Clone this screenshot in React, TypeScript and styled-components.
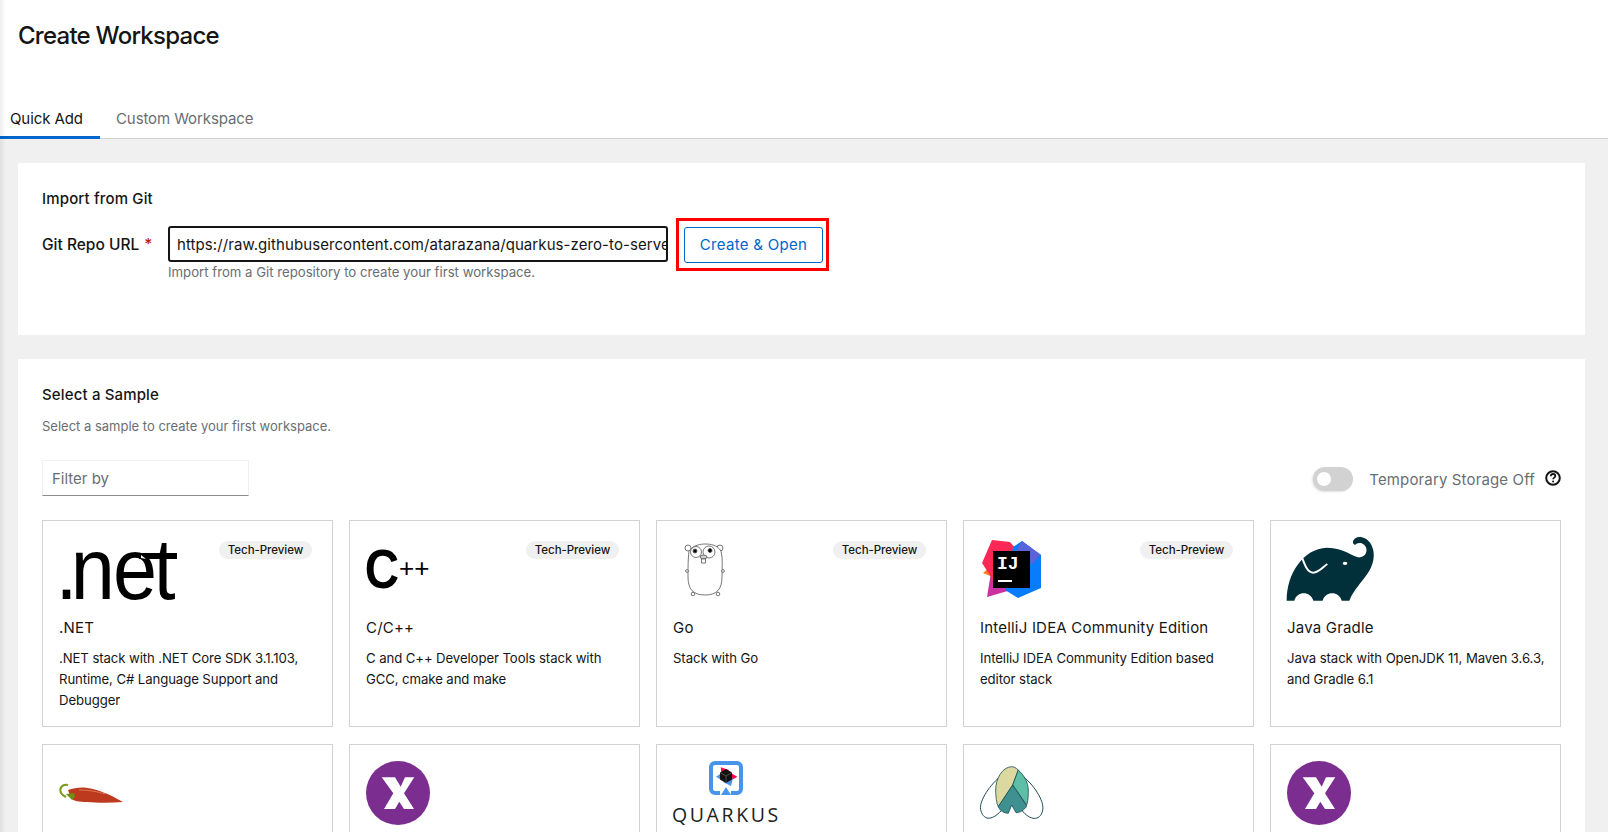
import styled, { createGlobalStyle } from 'styled-components'

const GlobalStyle = createGlobalStyle`
  html, body {
    margin: 0;
    padding: 0;
    height: 832px;
    overflow: hidden;
    background: #fff;
    font-family: "Inter", "Liberation Sans", sans-serif;
    color: #151515;
  }
  * { box-sizing: border-box; }
  svg { overflow: visible; display: block; }
`

const Page = styled.div`
  position: relative;
  height: 832px;
  overflow: hidden;
  display: flex;
  flex-direction: column;
`

const EdgeShadow = styled.div`
  position: absolute;
  left: 0;
  top: 0;
  bottom: 0;
  width: 6px;
  background: linear-gradient(to right, rgba(0, 0, 0, 0.07), rgba(0, 0, 0, 0));
  pointer-events: none;
`

const Header = styled.header`
  height: 103px;
  padding: 18px 18px 0;
  flex: none;
`

const Title = styled.h1`
  margin: 0;
  font-size: 24px;
  line-height: 36px;
  font-weight: 500;
  letter-spacing: -0.75px;
`

const Tabs = styled.nav`
  display: flex;
  height: 36px;
  flex: none;
  border-bottom: 1px solid #d2d2d2;
`

const Tab = styled.div<{ $active?: boolean }>`
  height: 36px;
  padding: 0 0 0 ${p => (p.$active ? '10px' : '16px')};
  width: ${p => (p.$active ? '100px' : 'auto')};
  font-size: 15px;
  line-height: 32px;
  letter-spacing: -0.1px;
  white-space: nowrap;
  color: ${p => (p.$active ? '#151515' : '#6a6e73')};
  border-bottom: ${p => (p.$active ? '3px solid #06c' : 'none')};
`

const Body = styled.main`
  flex: 1;
  min-height: 0;
  background: #f0f0f0;
  padding: 24px 23px 0 18px;
  display: flex;
  flex-direction: column;
  gap: 24px;
`

const Panel = styled.section<{ $height?: number }>`
  background: #fff;
  padding: 25px 24px 24px;
  flex: none;
  height: ${p => (p.$height ? `${p.$height}px` : 'auto')};
`

const PanelTitle = styled.h2`
  margin: 0;
  font-size: 15px;
  line-height: 22px;
  font-weight: 500;
  letter-spacing: 0.15px;
`

const ImportRow = styled.div`
  display: flex;
  align-items: flex-start;
  margin-top: 16px;
`

const FieldLabel = styled.label`
  width: 126px;
  flex: none;
  font-size: 15.5px;
  font-weight: 500;
  line-height: 38px;
`

const Required = styled.span`
  color: #c9190b;
  margin-left: 1px;
`

const FieldColumn = styled.div`
  width: 500px;
  flex: none;
`

const UrlBox = styled.div`
  height: 36px;
  width: 100%;
  border: 2px solid #151515;
  border-radius: 3px;
  padding: 0 7px;
  font-size: 15px;
  line-height: 33px;
  letter-spacing: 0.08px;
  white-space: nowrap;
  overflow: hidden;
  background: #fff;
`

const HelpText = styled.div`
  font-size: 13.2px;
  line-height: 20px;
  color: #6a6e73;
`

const Highlight = styled.div`
  margin: -8px 0 0 8px;
  border: 3px solid #f00;
  padding: 6px 3px 5px 5px;
  flex: none;
`

const PrimaryOutline = styled.button`
  display: block;
  width: 139px;
  height: 36px;
  padding: 0 0 2px;
  background: #fff;
  border: 1px solid #06c;
  border-radius: 3px;
  color: #06c;
  font-family: inherit;
  font-size: 15px;
  letter-spacing: 0.3px;
`

const Subtitle = styled.div`
  margin-top: 10px;
  font-size: 13px;
  line-height: 20px;
  color: #6a6e73;
`

const Toolbar = styled.div`
  display: flex;
  justify-content: space-between;
  align-items: center;
  margin-top: 24px;
  height: 36px;
`

const FilterBox = styled.div`
  width: 207px;
  height: 36px;
  border: 1px solid #f0f0f0;
  border-bottom: 1px solid #8a8d90;
  padding: 0 9px;
  font-size: 15px;
  line-height: 36px;
  color: #6a6e73;
`

const StorageToggle = styled.div`
  display: flex;
  align-items: center;
  padding-top: 2px;
`

const Switch = styled.div`
  position: relative;
  width: 40px;
  height: 24px;
  border-radius: 12px;
  background: #d2d2d2;
  box-shadow: -1px 1px 2px rgba(0, 0, 0, 0.12);
  &::before {
    content: '';
    position: absolute;
    left: 4px;
    top: 5px;
    width: 14px;
    height: 14px;
    border-radius: 50%;
    background: #fff;
  }
`

const SwitchLabel = styled.span`
  margin-left: 16px;
  font-size: 15px;
  letter-spacing: 0.14px;
  color: #6a6e73;
`

const HelpIcon = styled.svg`
  width: 16px;
  height: 16px;
  margin: -2px 0 0 10px;
`

const SampleGrid = styled.div`
  display: grid;
  grid-template-columns: repeat(5, 291px);
  column-gap: 16px;
  row-gap: 17px;
  margin-top: 24px;
`

const Card = styled.article`
  position: relative;
  height: 207px;
  border: 1px solid #d2d2d2;
  padding: 16px 8px 16px 16px;
`

const Badge = styled.span`
  position: absolute;
  top: 20px;
  right: 20px;
  width: 93px;
  height: 18px;
  border-radius: 9px;
  background: #f0f0f0;
  font-size: 11.5px;
  font-weight: 500;
  line-height: 18px;
  text-align: center;
  letter-spacing: -0.05px;
`

const LogoSlot = styled.div`
  height: 75px;
  display: flex;
  align-items: flex-start;
`

const CardName = styled.h3`
  margin: 5px 0 0;
  font-size: 15px;
  line-height: 22px;
  font-weight: 400;
  letter-spacing: 0.2px;
`

const CardText = styled.p`
  margin: 9px 0 0;
  font-size: 13.2px;
  line-height: 21px;
  letter-spacing: -0.1px;
`

const DotNetLogo = () => (
  <svg width="122" height="66" viewBox="0 0 122 66">
    <g transform="scale(.9 1)" fontFamily="Liberation Sans" fontSize="88" fill="#000">
      <text x="-4" y="62">.</text>
      <text x="13" y="62">n</text>
      <text x="60" y="62">e</text>
      <text x="105" y="62">t</text>
    </g>
    <rect x="80" y="16" width="38" height="6" fill="#000" />
    <polygon points="82,18 87,22 82,21" fill="#fff" />
  </svg>
)

const CppLogo = () => (
  <svg width="66" height="66" viewBox="0 0 66 66">
    <text transform="scale(.85 1)" x="-1.4" y="51.5" fontFamily="Liberation Sans" fontWeight="700" fontSize="56" fill="#000">C</text>
    <text x="33" y="40" fontFamily="Liberation Sans" fontSize="26" fill="#000">++</text>
  </svg>
)

const GopherLogo = () => (
  <svg width="60" height="64" viewBox="0 0 60 64" fill="#fff" stroke="#555" strokeWidth="0.8">
    <circle cx="15" cy="11" r="3" />
    <circle cx="47" cy="11" r="3" />
    <path d="M16 14C20 8 28 7 32 7C38 7 44 8 48 14C50 22 49 30 49 40C49 52 44 58 32 58C20 58 15 52 15 40C15 30 15 22 16 14z" />
    <circle cx="23" cy="15" r="5.5" />
    <circle cx="36" cy="15" r="6" />
    <circle cx="22" cy="14" r="2" fill="#000" />
    <circle cx="37" cy="13.5" r="2" fill="#000" />
    <ellipse cx="30.5" cy="20" rx="3.5" ry="2" fill="#ccc" />
    <path d="M28.5 22h4v4h-4z" />
    <circle cx="14" cy="34" r="1.4" />
    <circle cx="50" cy="34" r="1.4" />
    <circle cx="20" cy="57" r="1.8" />
    <circle cx="45" cy="57" r="1.8" />
  </svg>
)

const IdeaLogo = () => (
  <svg width="62" height="62" viewBox="0 0 62 62">
    <polygon points="3,36 12,28 15,41" fill="#fc801d" />
    <polygon points="7,60 13,23 30,40 38,51" fill="#c9329f" />
    <polygon points="12,3 30,5 37,13 13,43 2,26" fill="#fe2857" />
    <polygon points="42,4 61,18 61,51 38,61 25,53 33,10" fill="#087cfa" />
    <polygon points="42,4 61,18 51,28 36,14" fill="#5a63d8" />
    <rect x="13" y="14" width="37" height="37" fill="#000" />
    <text x="17" y="32" fontFamily="Liberation Mono" fontWeight="700" fontSize="18" fill="#fff">IJ</text>
    <rect x="18" y="43" width="14" height="2" fill="#fff" />
  </svg>
)

const GradleLogo = () => (
  <svg width="92" height="66" viewBox="81 261 276 198">
    <path
      fill="#02303a"
      d="M80 452C80 370 130 296 200 293C250 292 285 325 300 322C322 320 328 290 305 280C296 277 290 280 285 285C270 278 285 256 305 262C335 268 346 305 340 330C330 380 290 400 268 452H245C238 422 195 422 188 452H160C152 422 110 422 103 452Z"
    />
    <path d="M127 325C135 345 142 368 160 368C175 368 190 350 202 342" stroke="#fff" strokeWidth="6" fill="none" />
    <ellipse cx="255" cy="340" rx="7" ry="5" fill="#fff" />
  </svg>
)

const ChiliLogo = () => (
  <svg width="66" height="46" viewBox="0 0 66 46">
    <path d="M9 29C15 27 22 26 28 27C38 28 50 33 64 41C52 42 38 42 28 41C20 41 14 40 12 37z" fill="#bd3a1e" />
    <path d="M20 29C30 29 40 31 46 33" stroke="#dd7755" strokeWidth="1" fill="none" />
    <path d="M9 24C3 23 0 27 2 32C3 34 5 35 7 36" stroke="#7d9a1a" strokeWidth="2" fill="none" />
    <path d="M7 33L15 32L16 36L13 39z" fill="#6f8f12" />
  </svg>
)

const XLogo = () => (
  <svg width="64" height="64" viewBox="0 0 64 64">
    <circle cx="32" cy="32" r="32" fill="#7b2e8f" />
    <polygon
      fill="#fff"
      points="15.7,16.3 29,16.3 34.7,25.7 39,16.3 48.3,16.3 38,32.3 48,48 38,48 33.3,40.7 29,48 18,48 27.3,32.3"
    />
  </svg>
)

const QuarkusLogo = () => (
  <svg width="112" height="64" viewBox="0 0 112 64">
    <path d="M47 32H42a4 4 0 0 1-4-4V6a4 4 0 0 1 4-4h22a4 4 0 0 1 4 4v22a4 4 0 0 1-4 4h-6" fill="none" stroke="#4695eb" strokeWidth="4" />
    <polygon points="53,26 58,34 48,34" fill="#4695eb" />
    <polygon points="47.7,6.3 56,9 49,17" fill="#ff004a" />
    <polygon points="64.3,15.7 56,11 57,20" fill="#ff004a" />
    <polygon points="43,15.7 50,11 50,20" fill="#4695eb" />
    <polygon points="58,25 60,17 50,21" fill="#4695eb" />
    <polygon points="53,8 59,11.5 59,18.5 53,22 47,18.5 47,11.5" fill="#111" />
    <path d="M47 11.5L53 15L59 11.5M53 15V22" stroke="#777" strokeWidth="0.6" fill="none" />
    <text x="-1" y="60.7" fontFamily="Open Sans" fontSize="19.5" letterSpacing="2.6" fill="#222">QUARKUS</text>
  </svg>
)

const BeeLogo = () => (
  <svg width="66" height="60" viewBox="0 0 66 60">
    <path d="M20 15.7C8 26 -2 42 1 50C4 60 13 60 23.3 47.3M43.3 15.7C56 26 65 42 62.5 50C60 60 50 60 41.7 49" fill="#fff" stroke="#1d4a50" strokeWidth="1" />
    <path d="M31.7 5.7C22 6 15.7 18 15.7 29C15.7 36 16.5 42 18.3 45.7L32.7 24L38.3 9C36 7 34 5.7 31.7 5.7z" fill="#dbd99f" stroke="#1d4a50" strokeWidth="0.8" />
    <path d="M38.3 9C44 14 48.3 22 48.3 29C48.3 36 48 40 46.7 44L32.7 24z" fill="#5cbfa6" stroke="#1d4a50" strokeWidth="0.8" />
    <path d="M32.7 24L18.3 45.7C20 50 24 52 28.3 52.3L31.7 44L36 51.7C40 51.5 44.5 49 46.7 45z" fill="#3f9191" stroke="#1d4a50" strokeWidth="0.8" />
  </svg>
)

const samples = [
  { name: '.NET', logo: <DotNetLogo />, preview: true, text: '.NET stack with .NET Core SDK 3.1.103, Runtime, C# Language Support and Debugger' },
  { name: 'C/C++', logo: <CppLogo />, preview: true, text: 'C and C++ Developer Tools stack with GCC, cmake and make' },
  { name: 'Go', logo: <GopherLogo />, preview: true, text: 'Stack with Go' },
  { name: 'IntelliJ IDEA Community Edition', logo: <IdeaLogo />, preview: true, text: 'IntelliJ IDEA Community Edition based editor stack' },
  { name: 'Java Gradle', logo: <GradleLogo />, preview: false, text: 'Java stack with OpenJDK 11, Maven 3.6.3, and Gradle 6.1' },
  { name: '', logo: <ChiliLogo />, preview: false, text: '' },
  { name: '', logo: <XLogo />, preview: false, text: '' },
  { name: '', logo: <QuarkusLogo />, preview: false, text: '' },
  { name: '', logo: <BeeLogo />, preview: false, text: '' },
  { name: '', logo: <XLogo />, preview: false, text: '' },
]

export default function App() {
  return (
    <Page>
      <GlobalStyle />
      <Header>
        <Title>Create Workspace</Title>
      </Header>
      <Tabs>
        <Tab $active>Quick Add</Tab>
        <Tab>Custom Workspace</Tab>
      </Tabs>
      <Body>
        <Panel $height={172}>
          <PanelTitle>Import from Git</PanelTitle>
          <ImportRow>
            <FieldLabel>
              Git Repo URL <Required>*</Required>
            </FieldLabel>
            <FieldColumn>
              <UrlBox>https://raw.githubusercontent.com/atarazana/quarkus-zero-to-serverless-guide/main/devfile.yaml</UrlBox>
              <HelpText>Import from a Git repository to create your first workspace.</HelpText>
            </FieldColumn>
            <Highlight>
              <PrimaryOutline>Create &amp; Open</PrimaryOutline>
            </Highlight>
          </ImportRow>
        </Panel>
        <Panel>
          <PanelTitle>Select a Sample</PanelTitle>
          <Subtitle>Select a sample to create your first workspace.</Subtitle>
          <Toolbar>
            <FilterBox>Filter by</FilterBox>
            <StorageToggle>
              <Switch />
              <SwitchLabel>Temporary Storage Off</SwitchLabel>
              <HelpIcon viewBox="0 0 16 16" fill="none">
                <circle cx="8" cy="8" r="6.8" stroke="#151515" strokeWidth="2" />
                <path d="M5.8 6.2C5.9 4.8 6.9 4 8.1 4c1.3 0 2.2.8 2.2 1.9 0 1.7-2.2 1.7-2.2 3.4" stroke="#151515" strokeWidth="1.8" />
                <circle cx="8.1" cy="11.6" r="1" fill="#151515" />
              </HelpIcon>
            </StorageToggle>
          </Toolbar>
          <SampleGrid>
            {samples.map((s, i) => (
              <Card key={i}>
                {s.preview && <Badge>Tech-Preview</Badge>}
                <LogoSlot>{s.logo}</LogoSlot>
                {s.name && <CardName>{s.name}</CardName>}
                {s.text && <CardText>{s.text}</CardText>}
              </Card>
            ))}
          </SampleGrid>
        </Panel>
      </Body>
      <EdgeShadow />
    </Page>
  )
}
